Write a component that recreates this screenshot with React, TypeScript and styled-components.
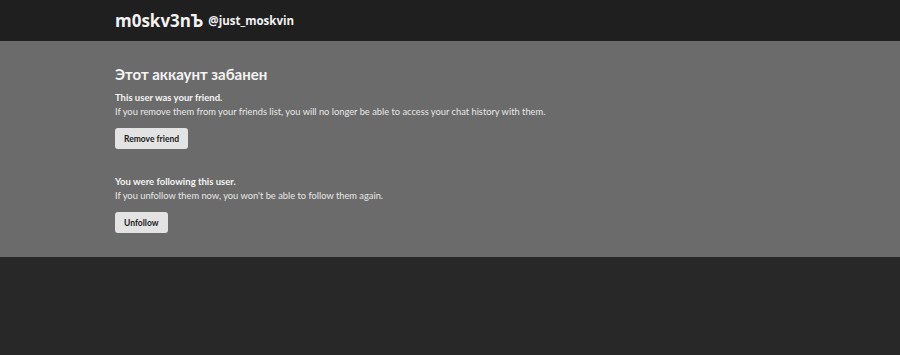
import { createGlobalStyle } from "styled-components";
import styled from "styled-components";

const GlobalStyle = createGlobalStyle`
  html, body {
    margin: 0;
    padding: 0;
    background: #282828;
    font-family: Lato, "Noto Sans", sans-serif;
  }
`;

const Header = styled.header`
  height: 41px;
  background: #1f1f1f;
  display: flex;
  align-items: center;
  gap: 5px;
  padding: 0 115px;
  box-sizing: border-box;
  color: #f2f2f2;
  font-family: "Open Sans", "Noto Sans", sans-serif;
`;

const DisplayName = styled.span`
  font-size: 17px;
  font-weight: 700;
`;

const Handle = styled.span`
  font-size: 11.5px;
  font-weight: 700;
`;

const Main = styled.main`
  background: #6b6b6b;
  height: 216px;
  padding: 24px 115px 0;
  box-sizing: border-box;
  color: #f4f4f4;
`;

const Title = styled.h1`
  margin: 0 0 8px;
  font-size: 15px;
  line-height: 18px;
  font-weight: 700;
`;

const Section = styled.section`
  margin-bottom: 26px;
`;

const Lead = styled.div`
  font-size: 9.5px;
  font-weight: 700;
  line-height: 14px;
`;

const Note = styled.p`
  margin: 0 0 9px;
  font-size: 9.3px;
  line-height: 14px;
  color: #e8e8e8;
`;

const Button = styled.button`
  display: block;
  height: 21px;
  padding: 0 9px;
  border: none;
  border-radius: 3px;
  background: #e3e3e3;
  color: #1a1a1a;
  font-family: inherit;
  font-size: 8.5px;
  font-weight: 700;
  cursor: pointer;
`;

export default function App() {
  return (
    <>
      <GlobalStyle />
      <Header>
        <DisplayName>m0skv3nЪ</DisplayName>
        <Handle>@just_moskvin</Handle>
      </Header>
      <Main>
        <Title>Этот аккаунт забанен</Title>
        <Section>
          <Lead>This user was your friend.</Lead>
          <Note>
            If you remove them from your friends list, you will no longer be able to access your chat history with them.
          </Note>
          <Button>Remove friend</Button>
        </Section>
        <Section>
          <Lead>You were following this user.</Lead>
          <Note>If you unfollow them now, you won't be able to follow them again.</Note>
          <Button>Unfollow</Button>
        </Section>
      </Main>
    </>
  );
}
